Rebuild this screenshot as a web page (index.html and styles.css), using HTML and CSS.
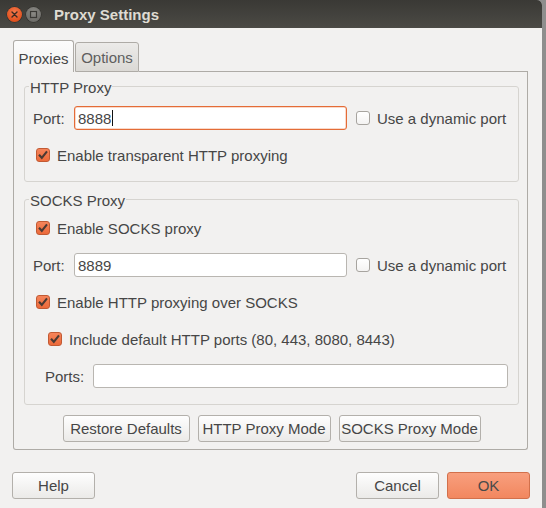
FILE: index.html
```html
<!DOCTYPE html>
<html>
<head>
<meta charset="utf-8">
<title>Proxy Settings</title>
<link rel="stylesheet" href="styles.css">
</head>
<body>
<div class="window">
  <div class="titlebar">
    <span class="wbtn close">
      <svg width="15" height="15" viewBox="0 0 15 15"><path d="M5 5 L10 10 M10 5 L5 10" stroke="#3a2a22" stroke-width="1.4" stroke-linecap="round"/></svg>
    </span>
    <span class="wbtn max">
      <svg width="15" height="15" viewBox="0 0 15 15"><rect x="4.5" y="4.5" width="6" height="6" fill="none" stroke="#3a3935" stroke-width="1.2"/></svg>
    </span>
    <span class="title">Proxy Settings</span>
  </div>
  <div class="content">
    <div class="notebook">
      <div class="tabs">
        <div class="tab active">Proxies</div>
        <div class="tab">Options</div>
        <div class="tab-fill"></div>
      </div>
      <div class="panel">
        <fieldset class="frame http">
          <legend>HTTP Proxy</legend>
          <div class="row port-row">
            <span class="lbl">Port:</span>
            <span class="input focus">8888<span class="caret"></span></span>
            <span class="cb"></span>
            <span>Use a dynamic port</span>
          </div>
          <div class="row check-row">
            <span class="cb on"><svg width="14" height="14" viewBox="0 0 14 14"><path d="M3 6.8 L5.8 9.8 L11 3.3" fill="none" stroke="#4a3a33" stroke-width="2.1"/></svg></span>
            <span>Enable transparent HTTP proxying</span>
          </div>
        </fieldset>
        <fieldset class="frame socks">
          <legend>SOCKS Proxy</legend>
          <div class="row check-row">
            <span class="cb on"><svg width="14" height="14" viewBox="0 0 14 14"><path d="M3 6.8 L5.8 9.8 L11 3.3" fill="none" stroke="#4a3a33" stroke-width="2.1"/></svg></span>
            <span>Enable SOCKS proxy</span>
          </div>
          <div class="row port-row">
            <span class="lbl">Port:</span>
            <span class="input">8889</span>
            <span class="cb"></span>
            <span>Use a dynamic port</span>
          </div>
          <div class="row check-row">
            <span class="cb on"><svg width="14" height="14" viewBox="0 0 14 14"><path d="M3 6.8 L5.8 9.8 L11 3.3" fill="none" stroke="#4a3a33" stroke-width="2.1"/></svg></span>
            <span>Enable HTTP proxying over SOCKS</span>
          </div>
          <div class="row sub-row">
            <span class="cb on"><svg width="14" height="14" viewBox="0 0 14 14"><path d="M3 6.8 L5.8 9.8 L11 3.3" fill="none" stroke="#4a3a33" stroke-width="2.1"/></svg></span>
            <span>Include default HTTP ports (80, 443, 8080, 8443)</span>
          </div>
          <div class="row ports-row">
            <span class="lbl">Ports:</span>
            <span class="input wide"></span>
          </div>
        </fieldset>
        <div class="btn-row">
          <span class="btn w-restore">Restore Defaults</span>
          <span class="btn w-http">HTTP Proxy Mode</span>
          <span class="btn w-socks">SOCKS Proxy Mode</span>
        </div>
      </div>
    </div>
  </div>
  <div class="actions">
    <span class="btn w-dlg">Help</span>
    <span class="spacer"></span>
    <span class="btn w-dlg cancel">Cancel</span>
    <span class="btn w-dlg ok">OK</span>
  </div>
</div>
</body>
</html>
```

FILE: styles.css
```css
html, body {
  margin: 0;
  padding: 0;
}
body {
  background: #8e8e8d;
  font-family: "Liberation Sans", Arial, sans-serif;
  font-size: 15px;
  color: #464646;
}
.window {
  width: 542px;
  height: 508px;
  background: #f2f1f0;
  border-top-right-radius: 5px;
  overflow: hidden;
  display: flex;
  flex-direction: column;
}
.titlebar {
  flex: none;
  height: 28px;
  background: linear-gradient(#3a3935, #4b4a45);
  display: flex;
  align-items: center;
}
.wbtn {
  width: 15px;
  height: 15px;
  border-radius: 50%;
  display: flex;
}
.close {
  margin-left: 7px;
  background: radial-gradient(circle at 50% 35%, #f47a4d, #e2521f 70%, #c8461a);
  box-shadow: 0 0 0 0.5px #2e2d2a;
}
.max {
  margin-left: 4px;
  background: radial-gradient(circle at 50% 35%, #8d8c87, #6f6e6a 70%, #5f5e5a);
  box-shadow: 0 0 0 0.5px #2e2d2a;
}
.title {
  margin-left: 13px;
  font-weight: bold;
  color: #dfdbd2;
  font-size: 15px;
  line-height: 18px;
  margin-top: 1px;
}
.content {
  flex: none;
  padding: 12px 14px 0 13px;
}
.notebook {
  width: 515px;
}
.tabs {
  display: flex;
  align-items: flex-end;
  height: 32px;
}
.tab {
  box-sizing: border-box;
  border: 1px solid #aeaba6;
  border-radius: 3px 3px 0 0;
  display: flex;
  align-items: center;
  justify-content: center;
  padding-top: 1px;
}
.tab.active {
  width: 61px;
  height: 32px;
  border-bottom: none;
  background: linear-gradient(#fcfcfc, #f2f1f0);
  color: #464646;
  padding-top: 3px;
}
.tab:not(.active) {
  width: 64px;
  height: 30px;
  margin-left: 1px;
  background: linear-gradient(#ecebe9, #dbd9d5);
  color: #5e5e5e;
}
.tab-fill {
  flex: 1;
  height: 0;
  border-bottom: 1px solid #aeaba6;
}
.panel {
  border: 1px solid #aeaba6;
  border-top: none;
  border-radius: 0 0 3px 3px;
  padding: 4px 8px 7px 10px;
}
.frame {
  margin: 0;
  border: 1px solid #d6d4d0;
  border-radius: 3px;
  min-width: 0;
}
.frame legend {
  padding: 4px 1px 0;
  margin-left: 4px;
  line-height: 16px;
}
.http {
  padding: 10px 0 14px 0;
}
.socks {
  margin-top: 7px;
  padding: 7px 0 16px 0;
}
.row {
  display: flex;
  align-items: center;
  height: 24px;
}
.row + .row {
  margin-top: 13px;
}
.port-row {
  padding-left: 8px;
}
.check-row {
  padding-left: 11px;
}
.sub-row {
  padding-left: 23px;
}
.ports-row {
  padding-left: 20px;
}
.lbl {
  flex: none;
}
.port-row .lbl {
  width: 41px;
}
.ports-row .lbl {
  width: 48px;
}
.input {
  box-sizing: border-box;
  height: 24px;
  width: 273px;
  background: #fff;
  border: 1px solid #b9b6b1;
  border-radius: 3px;
  padding-left: 3px;
  display: flex;
  align-items: center;
  color: #464646;
}
.input.focus {
  border-color: #e46c37;
  box-shadow: inset 0 0 0 0.5px #f4b396;
}
.input.wide {
  width: 415px;
}
.caret {
  width: 1px;
  height: 16px;
  background: #111;
  margin-left: 1px;
}
.cb {
  box-sizing: border-box;
  flex: none;
  width: 14px;
  height: 14px;
  border: 1px solid #a7a49f;
  border-radius: 3px;
  background: linear-gradient(#ffffff, #f4f3f2);
  margin-right: 7px;
  display: flex;
}
.port-row .cb {
  margin-left: 9px;
}
.cb.on {
  border-color: #c25a33;
  background: linear-gradient(#f5845a, #ec6a3a);
}
.cb.on svg {
  margin: -1px;
}
.btn-row {
  display: flex;
  justify-content: center;
  gap: 8px;
  margin-top: 10px;
}
.btn {
  box-sizing: border-box;
  height: 27px;
  border: 1px solid #b3b0ab;
  border-radius: 3px;
  background: linear-gradient(#fefefe, #ebeae8);
  display: flex;
  align-items: center;
  justify-content: center;
  color: #464646;
  white-space: nowrap;
}
.w-restore { width: 127px; }
.w-http { width: 133px; }
.w-socks { width: 142px; }
.w-dlg { width: 83px; }
.cancel { width: 83px; }
.ok {
  margin-left: 8px;
  border-color: #d2704b;
  background: linear-gradient(#f89f7e, #f2875f);
  color: #4a4a4a;
}
.actions {
  flex: none;
  display: flex;
  margin-top: 22px;
  padding: 0 12px;
}
.spacer {
  flex: 1;
}
```
